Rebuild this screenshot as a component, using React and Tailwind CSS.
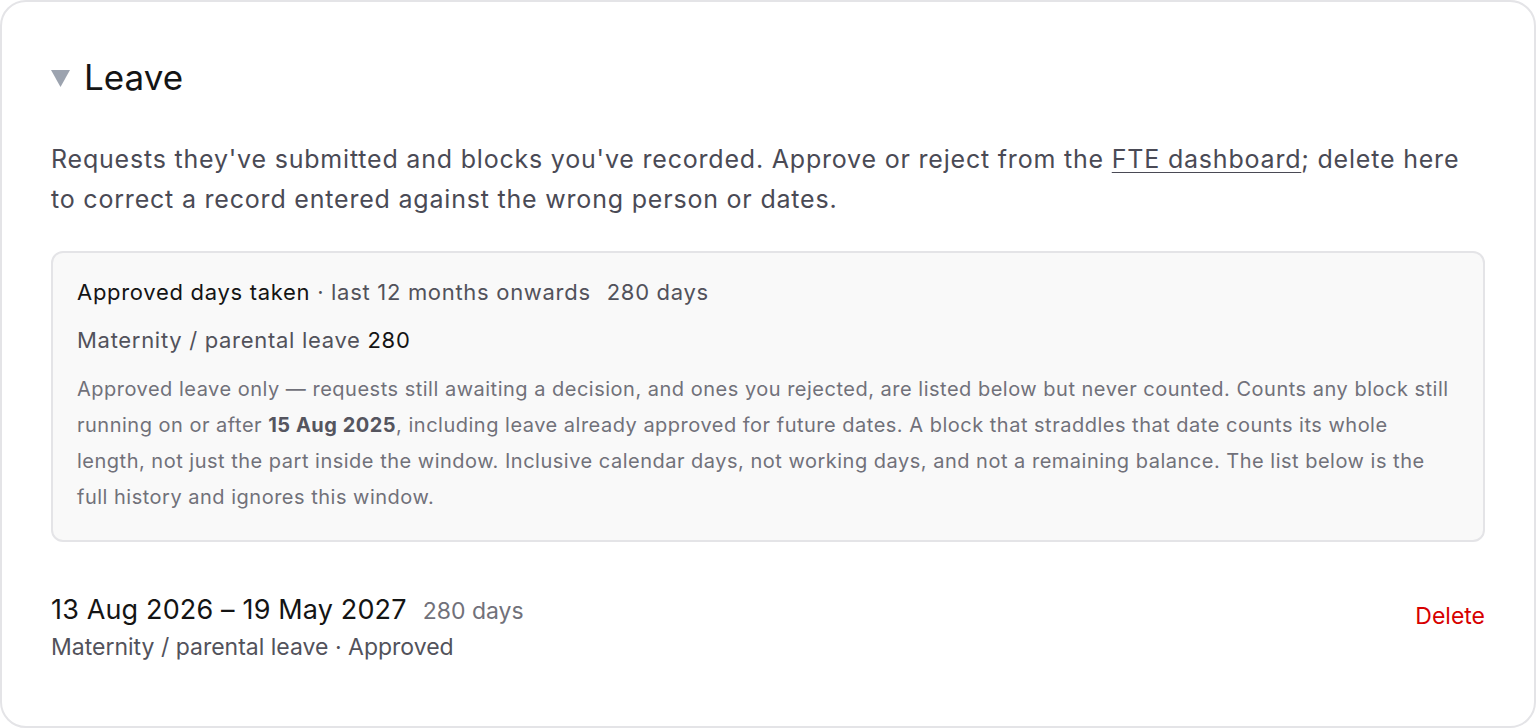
import React from 'react';

const font = { fontFamily: 'Inter, "Noto Sans", sans-serif' };

function LeaveRow() {
  return (
    <div className="flex items-start justify-between mt-[50px]">
      <div>
        <div className="flex items-baseline gap-4">
          <span className="text-[27px] leading-[36px] tracking-[0.15px] text-[#141414]">13 Aug 2026 – 19 May 2027</span>
          <span className="text-[23px] text-[#71717a]">280 days</span>
        </div>
        <div className="text-[23px] leading-[34px] text-[#52525b] mt-[1px]">Maternity / parental leave · Approved</div>
      </div>
      <button className="mt-[8px] text-[23px] leading-[32px] text-[#d70000]">Delete</button>
    </div>
  );
}

export default function App() {
  return (
    <div className="bg-white min-h-screen" style={font}>
      <section className="h-[728px] border-2 border-[#e4e4e7] rounded-[26px] px-[49px] pt-[49px]">
        <div className="flex items-center gap-[14px]">
          <svg width="19" height="17" viewBox="0 0 19 17" className="mt-[2px]">
            <polygon points="0,0 19,0 9.5,17" fill="#9ca3af" />
          </svg>
          <h2 className="text-[35px] leading-[52px] text-[#141414]">Leave</h2>
        </div>
        <p className="mt-[36px] text-[25px] leading-[40px] tracking-[0.8px] text-[#4a4a55]">
          Requests they've submitted and blocks you've recorded. Approve or reject from the{' '}
          <a className="underline underline-offset-4 decoration-1">FTE dashboard</a>; delete here to correct a record
          entered against the wrong person or dates.
        </p>
        <div className="mt-[32px] rounded-[12px] border-2 border-[#e4e4e7] bg-[#f9f9f9] px-[24px] pt-[23px] pb-[25px]">
          <div className="text-[22px] leading-[32px] tracking-[0.7px] text-[#52525b]">
            <span className="text-[#141414]">Approved days taken</span> · last 12 months onwards
            <span className="ml-4">280 days</span>
          </div>
          <div className="mt-[16px] text-[22px] leading-[32px] tracking-[0.7px] text-[#52525b]">
            Maternity / parental leave <span className="text-[#141414]">280</span>
          </div>
          <p className="mt-[15px] text-[20px] leading-[36px] tracking-[0.5px] text-[#71717a]">
            Approved leave only — requests still awaiting a decision, and ones you rejected, are listed below but never
            counted. Counts any block still
            <br />
            running on or after <b className="font-bold text-[#55555f]">15 Aug 2025</b>, including leave already
            approved for future dates. A block that straddles that date counts its whole
            <br />
            length, not just the part inside the window. Inclusive calendar days, not working days, and not a remaining
            balance. The list below is the
            <br />
            full history and ignores this window.
          </p>
        </div>
        <LeaveRow />
      </section>
    </div>
  );
}
